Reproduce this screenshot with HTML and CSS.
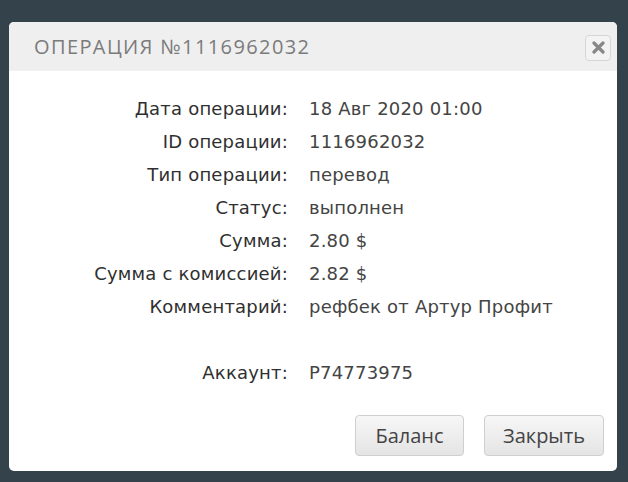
FILE: index.html
```html
<!DOCTYPE html>
<html lang="ru">
<head>
  <meta charset="UTF-8" />
  <meta name="viewport" content="width=device-width, initial-scale=1.0" />
  <title>Операция</title>
  <link rel="stylesheet" href="styles.css">
</head>
<body>
  <div class="modal">
    <div class="modal-header">
      <h3 class="modal-title">Операция №1116962032</h3>
      <button class="close-btn" type="button" aria-label="Закрыть">
        <svg width="13" height="13" viewBox="0 0 13 13">
          <path d="M2 2 L11 11 M11 2 L2 11" stroke="#888" stroke-width="3.2" stroke-linecap="round"/>
        </svg>
      </button>
    </div>

    <div class="modal-body">
      <dl class="details">
        <dt>Дата операции:</dt><dd>18 Авг 2020 01:00</dd>
        <dt>ID операции:</dt><dd>1116962032</dd>
        <dt>Тип операции:</dt><dd>перевод</dd>
        <dt>Статус:</dt><dd>выполнен</dd>
        <dt>Сумма:</dt><dd>2.80 $</dd>
        <dt>Сумма с комиссией:</dt><dd>2.82 $</dd>
        <dt>Комментарий:</dt><dd>рефбек от Артур Профит</dd>
        <dt class="spacer"></dt><dd class="spacer"></dd>
        <dt>Аккаунт:</dt><dd>P74773975</dd>
      </dl>
    </div>

    <div class="modal-footer">
      <button class="btn btn-balance" type="button">Баланс</button>
      <button class="btn btn-close" type="button">Закрыть</button>
    </div>
  </div>
</body>
</html>
```

FILE: styles.css
```css
body {
  margin: 0;
  padding: 22px 0 0 9px;
  background-color: #34434b;
  font-family: "Open Sans", sans-serif;
  color: #333;
}
.modal {
  width: 608px;
  height: 449px;
  background: #fff;
  border-radius: 5px;
  overflow: hidden;
  display: flex;
  flex-direction: column;
}
.modal-header {
  height: 49px;
  background: #efefef;
  display: flex;
  align-items: center;
  justify-content: space-between;
  padding: 0 6px 0 25px;
}
.modal-title {
  margin: 0;
  font-weight: normal;
  font-size: 20px;
  letter-spacing: 1.4px;
  text-transform: uppercase;
  color: #7b7b7b;
}
.close-btn {
  width: 26px;
  height: 26px;
  padding: 0;
  border: 1px solid #d6d6d6;
  border-radius: 4px;
  background: #f3f3f3;
  display: flex;
  align-items: center;
  justify-content: center;
  margin-top: 2px;
}
.modal-body {
  padding-top: 21px;
  flex: 1;
}
.details {
  margin: 0;
  display: grid;
  grid-template-columns: 279px auto;
  column-gap: 21px;
  font-family: "DejaVu Sans", sans-serif;
  font-size: 18px;
  letter-spacing: 0.2px;
  line-height: 33px;
}
.details dt {
  text-align: right;
  color: #2f2f2f;
}
.details dd {
  margin: 0;
  color: #444;
}
.details .spacer {
  height: 33px;
}
.modal-footer {
  display: flex;
  justify-content: flex-end;
  gap: 20px;
  padding: 0 13px 15px 0;
}
.btn {
  height: 41px;
  padding: 0;
  font-family: "Open Sans", sans-serif;
  font-size: 20px;
  color: #444;
  border: 1px solid #cfcfcf;
  border-radius: 4px;
  background: linear-gradient(#f7f7f7, #e4e4e4);
}
.btn-balance {
  width: 109px;
}
.btn-close {
  width: 120px;
}
```
